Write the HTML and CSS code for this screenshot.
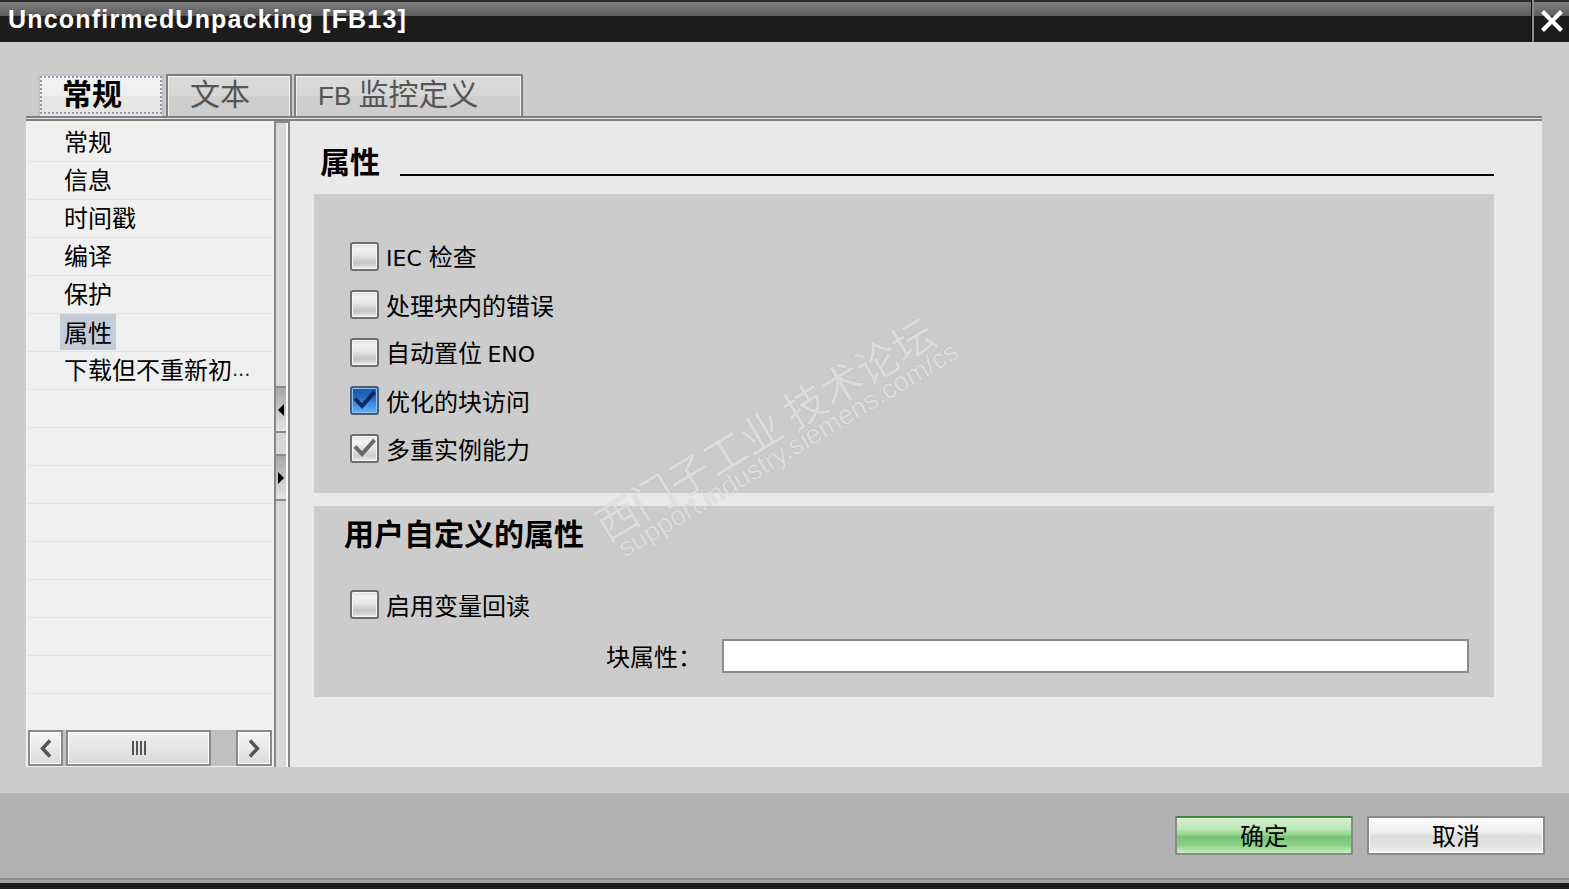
FILE: index.html
```html
<!DOCTYPE html>
<html lang="zh-CN">
<head>
<meta charset="utf-8">
<title>UnconfirmedUnpacking [FB13]</title>
<link rel="stylesheet" href="styles.css">
</head>
<body>
<div class="titlebar">
  <div class="title">UnconfirmedUnpacking [FB13]</div>
  <div class="close">
    <svg width="22" height="22" viewBox="0 0 22 22"><path d="M1.5 1.5 L20.5 20.5 M20.5 1.5 L1.5 20.5" stroke="#fff" stroke-width="4.2" fill="none"/></svg>
  </div>
</div>

<div class="main">
  <div class="tabs">
    <div class="tab tab-active">常规</div>
    <div class="tab tab-2">文本</div>
    <div class="tab tab-3"><span class="lat">FB </span>监控定义</div>
  </div>
  <div class="panel">
    <div class="panel-top"></div>
    <div class="panel-body">
      <div class="nav">
        <div class="nav-item">常规</div>
        <div class="nav-item">信息</div>
        <div class="nav-item">时间戳</div>
        <div class="nav-item">编译</div>
        <div class="nav-item">保护</div>
        <div class="nav-item"><span class="sel">属性</span></div>
        <div class="nav-item">下载但不重新初<span class="dots">...</span></div>
        <div class="nav-item"></div>
        <div class="nav-item"></div>
        <div class="nav-item"></div>
        <div class="nav-item"></div>
        <div class="nav-item"></div>
        <div class="nav-item"></div>
        <div class="nav-item"></div>
        <div class="nav-item"></div>
        <div class="nav-spacer"></div>
        <div class="hscroll">
          <div class="sb-btn sb-left">
            <svg width="12" height="19" viewBox="0 0 12 19"><path d="M10 1.5 L2.5 9.5 L10 17.5" stroke="#555" stroke-width="3.4" fill="none"/></svg>
          </div>
          <div class="sb-thumb"><span class="grip"></span><span class="grip"></span><span class="grip"></span><span class="grip"></span></div>
          <div class="sb-btn sb-right">
            <svg width="12" height="19" viewBox="0 0 12 19"><path d="M2 1.5 L9.5 9.5 L2 17.5" stroke="#555" stroke-width="3.4" fill="none"/></svg>
          </div>
        </div>
      </div>
      <div class="splitter">
        <div class="sp-btn sp-btn-1"><span class="arrow-left"></span></div>
        <div class="sp-btn sp-btn-2"><span class="arrow-right"></span></div>
      </div>
      <div class="content">
        <div class="heading-row">
          <div class="h1">属性</div>
          <div class="rule"></div>
        </div>
        <div class="group group-1">
          <div class="cb-row"><span class="cb"></span><span class="cb-label"><span class="lat">IEC </span>检查</span></div>
          <div class="cb-row"><span class="cb"></span><span class="cb-label">处理块内的错误</span></div>
          <div class="cb-row"><span class="cb"></span><span class="cb-label">自动置位 <span class="lat">ENO</span></span></div>
          <div class="cb-row"><span class="cb cb-checked"><svg width="25" height="25" viewBox="0 0 25 25"><path d="M3 10.5 L10 18 L22.5 4" stroke="#0b2a63" stroke-width="4" fill="none"/></svg></span><span class="cb-label">优化的块访问</span></div>
          <div class="cb-row"><span class="cb cb-disabled"><svg width="25" height="25" viewBox="0 0 25 25"><path d="M3 10.5 L10 18 L22.5 4" stroke="#6a6a6a" stroke-width="4" fill="none"/></svg></span><span class="cb-label">多重实例能力</span></div>
        </div>
        <div class="group group-2">
          <div class="h2">用户自定义的属性</div>
          <div class="cb-row cb-row-2"><span class="cb"></span><span class="cb-label">启用变量回读</span></div>
          <div class="field-row">
            <span class="field-label">块属性：</span>
            <span class="field-input"></span>
          </div>
        </div>
      </div>
    </div>
  </div>
</div>

<div class="footer">
  <div class="btn btn-ok">确定</div>
  <div class="btn btn-cancel">取消</div>
</div>
<div class="edge"></div>

<div class="wm wm-1">西门子工业 技术论坛</div>
<div class="wm wm-2">support.industry.siemens.com/cs</div>
</body>
</html>
```

FILE: styles.css
```css
html, body {
  margin: 0;
  padding: 0;
}
body {
  width: 1569px;
  height: 889px;
  overflow: hidden;
  background: #cccccc;
  font-family: "Noto Sans CJK SC", "Noto Sans", sans-serif;
  color: #000;
  position: relative;
}

/* title bar */
.titlebar {
  height: 42px;
  display: flex;
  background: linear-gradient(to bottom, #2b2b2b 0, #2b2b2b 2px, #7e7e7e 2px, #5c5c5c 16px, #1c1c1c 16px, #1c1c1c 100%);
}
.title {
  flex: 1;
  padding-left: 8px;
  font-family: "Liberation Sans", Arial, sans-serif;
  font-weight: bold;
  font-size: 25px;
  line-height: 39px;
  letter-spacing: 1.2px;
  color: #fff;
  white-space: nowrap;
}
.close {
  width: 38px;
  box-sizing: border-box;
  padding-left: 3px;
  display: flex;
  align-items: center;
  justify-content: center;
  background: linear-gradient(to right, #0e0e0e 0, #0e0e0e 1px, #8a8a8a 1px, #8a8a8a 3px, transparent 3px);
}
.close svg { display: block; }

/* main area */
.main {
  height: 751px;
  box-sizing: border-box;
  padding: 32px 27px 26px 26px;
  display: flex;
  flex-direction: column;
}
.tabs {
  display: flex;
  gap: 2px;
  margin-left: 12px;
  height: 42px;
  flex: none;
}
.tab {
  box-sizing: border-box;
  height: 42px;
  padding-left: 22px;
  border: 2px solid #7f7f7f;
  border-bottom: none;
  background: linear-gradient(to bottom, #dbdbdb 0, #d7d7d7 50%, #cfcfcf 50%, #cdcdcd 100%);
  box-shadow: inset 1px 1px 0 #f0f0f0, inset -1px 0 0 #f0f0f0;
  font-size: 30px;
  line-height: 33px;
  color: #555;
  white-space: nowrap;
}
.tab-active {
  width: 126px;
  border-color: #c2c2c2;
  background: linear-gradient(to bottom, #f3f3f3 0, #eeeeee 50%, #e7e7e7 50%, #e5e5e5 100%);
  box-shadow: none;
  color: #000;
  font-weight: bold;
  outline: 2px dotted #8d98b4;
  outline-offset: -4px;
}
.tab-2 { width: 126px; }
.tab-3 { width: 229px; }
.lat {
  font-family: "DejaVu Sans", sans-serif;
  font-size: 22px;
}
.tab .lat {
  font-family: "Liberation Sans", Arial, sans-serif;
  font-size: 26px;
}

.panel {
  flex: 1;
  display: flex;
  flex-direction: column;
}
.panel-top {
  height: 5px;
  flex: none;
  background: linear-gradient(to bottom, #7f7f7f 0, #7f7f7f 2px, #e4e4e4 2px, #e4e4e4 3px, #7f7f7f 3px, #7f7f7f 5px);
}
.panel-body {
  flex: 1;
  display: flex;
}

/* navigation */
.nav {
  width: 248px;
  flex: none;
  box-sizing: border-box;
  padding-top: 3px;
  background: #f0f0f0;
  display: flex;
  flex-direction: column;
}
.nav-item {
  margin: 0 2px;
  height: 38px;
  box-sizing: border-box;
  border-bottom: 1px solid #e3e3e3;
  padding-left: 36px;
  padding-bottom: 3px;
  display: flex;
  align-items: center;
  font-size: 24px;
  line-height: 34px;
  white-space: nowrap;
  overflow: hidden;
  flex: none;
}
.sel {
  display: inline-block;
  background: #c3ccd7;
  padding: 0 4px 1px;
  margin-left: -4px;
  margin-top: 2px;
  line-height: 35px;
}
.dots {
  font-family: "Liberation Sans", Arial, sans-serif;
  font-size: 22px;
  color: #333;
}
.nav-spacer { flex: 1; }
.hscroll {
  height: 36px;
  margin: 0 2px 1px;
  display: flex;
  background: #c0c0c0;
  flex: none;
}
.sb-btn {
  box-sizing: border-box;
  border: 2px solid #8a8a8a;
  background: linear-gradient(to bottom, #f4f4f4, #dcdcdc);
  box-shadow: inset 0 0 0 1px #fff;
  display: flex;
  align-items: center;
  justify-content: center;
}
.sb-btn svg { display: block; }
.sb-left { width: 35px; }
.sb-right { width: 36px; margin-left: auto; }
.sb-thumb {
  width: 145px;
  margin-left: 3px;
  box-sizing: border-box;
  border: 2px solid #8a8a8a;
  background: linear-gradient(to bottom, #f0f0f0, #dadada);
  box-shadow: inset 0 0 0 1px #fff;
  display: flex;
  align-items: center;
  justify-content: center;
  gap: 2px;
}
.grip {
  width: 2px;
  height: 14px;
  background: #555;
}

/* splitter */
.splitter {
  width: 16px;
  flex: none;
  box-sizing: border-box;
  border-left: 2px solid #888;
  border-right: 2px solid #888;
  border-top: 2px solid #888;
  background: linear-gradient(to right, #d7d7d7 0, #d7d7d7 10px, #fafafa 10px, #fafafa 12px);
  display: flex;
  flex-direction: column;
}
.sp-btn {
  width: 10px;
  height: 47px;
  box-sizing: border-box;
  border-top: 2px solid #8a8a8a;
  border-bottom: 2px solid #8a8a8a;
  background: linear-gradient(to bottom, #a6a6a6, #e4e4e4);
  display: flex;
  align-items: center;
}
.sp-btn-1 { margin-top: 263px; }
.sp-btn-2 { margin-top: 21px; }
.arrow-left {
  width: 0;
  height: 0;
  margin-left: 2px;
  border-right: 6px solid #000;
  border-top: 6px solid transparent;
  border-bottom: 6px solid transparent;
}
.arrow-right {
  width: 0;
  height: 0;
  margin-left: 2px;
  border-left: 6px solid #000;
  border-top: 6px solid transparent;
  border-bottom: 6px solid transparent;
}

/* content */
.content {
  flex: 1;
  background: #e9e9e9;
  padding: 24px 48px 0 24px;
}
.heading-row {
  display: flex;
  height: 32px;
  padding-left: 6px;
}
.h1 {
  font-size: 30px;
  font-weight: bold;
  line-height: 30px;
  white-space: nowrap;
}
.rule {
  flex: 1;
  height: 2px;
  background: #000;
  align-self: flex-end;
  margin: 0 0 1px 20px;
}
.group {
  background: #cccccc;
  display: flex;
  flex-direction: column;
}
.group-1 {
  margin-top: 17px;
  padding: 48px 36px 30px;
  gap: 19px;
}
.group-2 {
  margin-top: 13px;
  padding: 9px 25px 24px 36px;
}
.cb-row {
  display: flex;
  align-items: center;
  height: 29px;
}
.cb {
  width: 29px;
  height: 29px;
  box-sizing: border-box;
  flex: none;
  border: 2px solid #6e6e6e;
  border-radius: 3px;
  background: linear-gradient(to bottom, #dedede 0%, #f3f3f3 20%, #e6e6e6 45%, #c6c6c6 75%, #cfcfcf 85%, #f4f4f4 100%);
  box-shadow: inset 0 0 0 1px #f6f6f6;
  display: flex;
  align-items: center;
  justify-content: center;
}
.cb svg { display: block; }
.cb-checked {
  border-color: #4f5d70;
  background: linear-gradient(to bottom, #1b56ad 0%, #2566c0 35%, #3f8ee0 65%, #62b6f4 100%);
  box-shadow: inset 0 0 0 1px #8fc0ee;
}
.cb-disabled {
  background: linear-gradient(to bottom, #e4e4e4 0%, #f4f4f4 25%, #e0e0e0 55%, #cdcdcd 80%, #f0f0f0 100%);
}
.cb-label {
  margin-left: 7px;
  font-size: 24px;
  line-height: 29px;
  white-space: nowrap;
}
.h2 {
  font-size: 30px;
  font-weight: bold;
  line-height: 34px;
  margin-left: -6px;
  margin-bottom: 2px;
  white-space: nowrap;
}
.cb-row-2 { margin-top: 39px; }
.field-row {
  display: flex;
  align-items: center;
  height: 34px;
  margin-top: 20px;
}
.field-label {
  margin-left: 256px;
  width: 96px;
  font-size: 24px;
  line-height: 34px;
  white-space: nowrap;
  flex: none;
}
.field-input {
  flex: 1;
  height: 34px;
  margin-left: 20px;
  box-sizing: border-box;
  border: 2px solid #8c8c8c;
  background: #fff;
}

/* footer */
.footer {
  height: 85px;
  box-sizing: border-box;
  padding: 23px 24px 0 0;
  background: #b2b2b2;
  display: flex;
  justify-content: flex-end;
  gap: 14px;
}
.btn {
  width: 178px;
  height: 39px;
  box-sizing: border-box;
  border: 2px solid #8a8a8a;
  font-size: 24px;
  line-height: 34px;
  text-align: center;
}
.btn-ok {
  border-top-color: #3b8a3b;
  background: linear-gradient(to bottom, #d4f1cf 0%, #bde8b7 30%, #93d48d 47%, #77c373 55%, #8fd289 78%, #c4efbc 100%);
  box-shadow: inset 0 1px 0 #e6f7e3;
}
.btn-cancel {
  background: linear-gradient(to bottom, #fbfbfb 0%, #eeeeee 40%, #dcdcdc 52%, #e2e2e2 80%, #f1f1f1 100%);
  box-shadow: inset 0 0 0 1px #fff;
}
.edge {
  height: 11px;
  background: linear-gradient(to bottom, #8c8c8c 0, #8c8c8c 2px, #a2a2a2 2px, #a2a2a2 5px, #1c1c1c 5px, #1c1c1c 100%);
}

/* watermark overlay */
.wm {
  position: absolute;
  white-space: nowrap;
  color: rgba(255, 255, 255, 0.6);
  text-shadow: 0 0 1px rgba(130, 130, 130, 0.5);
  transform: rotate(-31deg);
  pointer-events: none;
}
.wm-1 {
  left: 606px;
  top: 504px;
  font-size: 42px;
  line-height: 42px;
  transform-origin: 0 37px;
}
.wm-2 {
  left: 625px;
  top: 536px;
  font-family: "Liberation Sans", Arial, sans-serif;
  font-size: 27px;
  line-height: 27px;
  transform-origin: 0 22px;
}
```
